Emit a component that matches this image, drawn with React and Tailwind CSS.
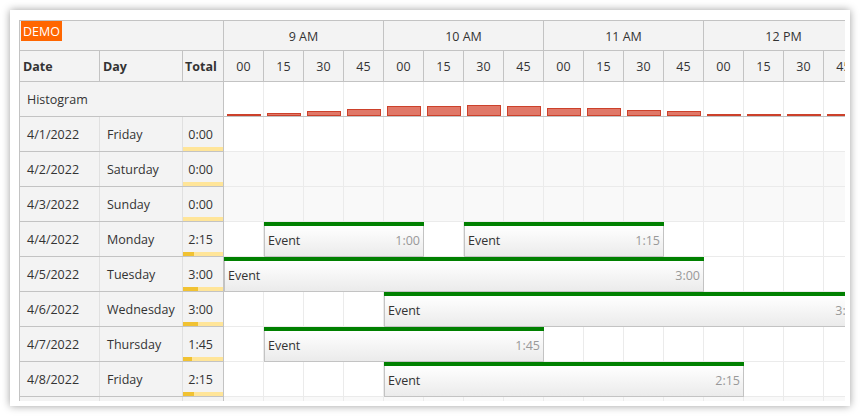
import React from "react";

const hist = [2, 3, 5, 7, 10, 10, 11, 10, 8, 8, 6, 5, 2, 2, 2, 2];
const hours = ["9 AM", "10 AM", "11 AM", "12 PM"];
const mins = ["00", "15", "30", "45"];

const rows = [
  { date: "4/1/2022", day: "Friday", total: "0:00", h: 0, weekend: false, events: [] },
  { date: "4/2/2022", day: "Saturday", total: "0:00", h: 0, weekend: true, events: [] },
  { date: "4/3/2022", day: "Sunday", total: "0:00", h: 0, weekend: true, events: [] },
  { date: "4/4/2022", day: "Monday", total: "2:15", h: 2.25, weekend: false, events: [{ l: 40, w: 160, d: "1:00" }, { l: 240, w: 200, d: "1:15" }] },
  { date: "4/5/2022", day: "Tuesday", total: "3:00", h: 3, weekend: false, events: [{ l: 0, w: 480, d: "3:00" }] },
  { date: "4/6/2022", day: "Wednesday", total: "3:00", h: 3, weekend: false, events: [{ l: 160, w: 480, d: "3:00" }] },
  { date: "4/7/2022", day: "Thursday", total: "1:45", h: 1.75, weekend: false, events: [{ l: 40, w: 280, d: "1:45" }] },
  { date: "4/8/2022", day: "Friday", total: "2:15", h: 2.25, weekend: false, events: [{ l: 160, w: 360, d: "2:15" }] },
  { date: "4/9/2022", day: "Saturday", total: "0:00", h: 0, weekend: true, events: [] },
];

const cells = Array.from({ length: 16 }, (_, i) => i);

function Event({ e }) {
  return (
    <div className="absolute top-0 h-[35px] flex flex-col" style={{ left: e.l, width: e.w }}>
      <div className="h-[4px] bg-[#008000] shrink-0" />
      <div className="flex-1 border-x border-b border-[#c3c3c3] bg-gradient-to-b from-white to-[#ebebeb] flex items-center justify-between px-[3px] whitespace-nowrap">
        <span className="text-[#333]">Event</span>
        <span className="text-[#999]">{e.d}</span>
      </div>
    </div>
  );
}

export default function App() {
  return (
    <div
      className="w-[860px] h-[416px] bg-white p-[10px] text-[12.5px] text-[#333]"
      style={{ fontFamily: '"Open Sans", "Noto Sans", sans-serif' }}
    >
      <div className="w-[840px] h-[396px] bg-white shadow-[0_0_8px_rgba(0,0,0,0.38)] pt-[10px] pl-[9px]">
        <div className="w-[826px] h-[381px] overflow-hidden border-t border-[#c3c3c3]">
          {/* header row 1 */}
          <div className="flex h-[30px]">
            <div className="w-[205px] shrink-0 bg-[#f3f3f3] border-l border-r border-b border-[#c3c3c3] pl-[1px]">
              <div className="inline-block bg-[#ff6600] text-white px-[2px] h-[20px] leading-[21px] text-[12.5px]">DEMO</div>
            </div>
            <div className="flex">
              {hours.map((h) => (
                <div key={h} className="w-[160px] shrink-0 bg-[#f3f3f3] border-r border-b border-[#c3c3c3] flex items-center justify-center pt-[4px]">
                  {h}
                </div>
              ))}
            </div>
          </div>
          {/* header row 2 */}
          <div className="flex h-[31px]">
            <div className="w-[205px] shrink-0 flex bg-[#f3f3f3] border-l border-r border-b border-[#c3c3c3] font-bold">
              <div className="w-[80px] border-r border-[#c3c3c3] flex items-center pl-[3px] pt-[2px]">Date</div>
              <div className="w-[83px] border-r border-[#c3c3c3] flex items-center pl-[3px] pt-[2px]">Day</div>
              <div className="w-[40px] flex items-center pl-[2px] pt-[2px]">Total</div>
            </div>
            <div className="flex">
              {hours.map((h) =>
                mins.map((m) => (
                  <div key={h + m} className="w-[40px] shrink-0 bg-[#f3f3f3] border-r border-b border-[#c3c3c3] flex items-center justify-center pt-[2px]">
                    {m}
                  </div>
                ))
              )}
            </div>
          </div>
          {/* histogram */}
          <div className="flex h-[35px]">
            <div className="w-[205px] shrink-0 bg-[#f3f3f3] border-l border-r border-b border-[#c3c3c3] flex items-center pl-[7px] pt-[2px]">
              Histogram
            </div>
            <div className="flex border-b border-[#c3c3c3]">
              {cells.map((i) => (
                <div key={i} className="w-[40px] shrink-0 border-r border-[#ebebeb] flex items-end pl-[3px] pr-[2px]">
                  <div className="w-full bg-[#e07868] border border-[#cc412b]" style={{ height: hist[i] }} />
                </div>
              ))}
            </div>
          </div>
          {/* data rows */}
          {rows.map((r) => (
            <div key={r.date} className="flex h-[35px]">
              <div className="w-[205px] shrink-0 flex bg-[#f3f3f3] border-l border-r border-b border-[#c3c3c3]">
                <div className="w-[80px] border-r border-[#e0e0e0] flex items-center pl-[7px] pt-[3px]">{r.date}</div>
                <div className="w-[83px] border-r border-[#e0e0e0] flex items-center pl-[7px] pt-[3px]">{r.day}</div>
                <div className="w-[40px] relative flex items-center justify-end pr-[10px] pt-[3px]">
                  {r.total}
                  <div className="absolute left-0 right-0 bottom-0 h-[4px] bg-[#ffe599]">
                    <div className="h-full bg-[#f1c232]" style={{ width: r.h * 5 }} />
                  </div>
                </div>
              </div>
              <div className={"relative flex border-b border-[#ebebeb] " + (r.weekend ? "bg-[#f9f9f9]" : "bg-white")}>
                {cells.map((i) => (
                  <div key={i} className="w-[40px] shrink-0 border-r border-[#ebebeb]" />
                ))}
                {r.events.map((e, k) => (
                  <Event key={k} e={e} />
                ))}
              </div>
            </div>
          ))}
        </div>
      </div>
    </div>
  );
}
